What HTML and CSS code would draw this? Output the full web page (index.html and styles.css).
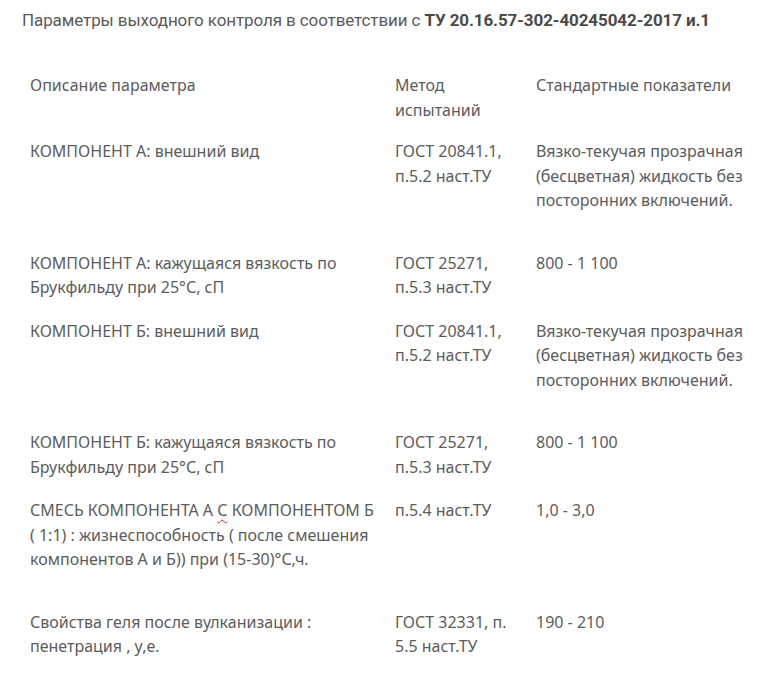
FILE: index.html
```html
<!DOCTYPE html>
<html lang="ru">
<head>
<meta charset="utf-8">
<link rel="stylesheet" href="styles.css">
</head>
<body>
<div class="page">
  <p class="title">Параметры выходного контроля в соответствии с <b>ТУ 20.16.57-302-40245042-2017 и.1</b></p>
  <table class="params">
    <tr class="head">
      <td class="c1">Описание параметра</td>
      <td class="c2">Метод испытаний</td>
      <td class="c3">Стандартные показатели</td>
    </tr>
    <tr class="tall">
      <td class="c1">КОМПОНЕНТ А: внешний вид</td>
      <td class="c2">ГОСТ 20841.1, п.5.2 наст.ТУ</td>
      <td class="c3">Вязко-текучая прозрачная (бесцветная) жидкость без посторонних включений.</td>
    </tr>
    <tr>
      <td class="c1">КОМПОНЕНТ А: кажущаяся вязкость по Брукфильду при 25°С, сП</td>
      <td class="c2">ГОСТ 25271, п.5.3 наст.ТУ</td>
      <td class="c3">800 - 1 100</td>
    </tr>
    <tr class="tall">
      <td class="c1">КОМПОНЕНТ Б: внешний вид</td>
      <td class="c2">ГОСТ 20841.1, п.5.2 наст.ТУ</td>
      <td class="c3">Вязко-текучая прозрачная (бесцветная) жидкость без посторонних включений.</td>
    </tr>
    <tr>
      <td class="c1">КОМПОНЕНТ Б: кажущаяся вязкость по Брукфильду при 25°С, сП</td>
      <td class="c2">ГОСТ 25271, п.5.3 наст.ТУ</td>
      <td class="c3">800 - 1 100</td>
    </tr>
    <tr class="tall">
      <td class="c1">СМЕСЬ КОМПОНЕНТА А <span class="spell">С</span> КОМПОНЕНТОМ Б ( 1:1) : жизнеспособность ( после смешения компонентов А и Б)) при (15-30)°С,ч.</td>
      <td class="c2">п.5.4 наст.ТУ</td>
      <td class="c3">1,0 - 3,0</td>
    </tr>
    <tr>
      <td class="c1">Свойства геля после вулканизации : пенетрация , у,е.</td>
      <td class="c2">ГОСТ 32331, п. 5.5 наст.ТУ</td>
      <td class="c3">190 - 210</td>
    </tr>
  </table>
</div>
</body>
</html>
```

FILE: styles.css
```css
html, body {
  margin: 0;
  padding: 0;
  background: #ffffff;
}
body {
  font-family: "Noto Sans", "Open Sans", sans-serif;
  color: #5c5c5c;
}
.page {
  padding: 8px 0 0 22px;
}
.title {
  margin: 0;
  font-family: "Roboto", "Liberation Sans", sans-serif;
  font-size: 17px;
  line-height: 24px;
  letter-spacing: -0.1px;
  color: #5a5a5a;
}
.title b {
  font-weight: 700;
  color: #4a4a4a;
}
.params {
  border-collapse: collapse;
  margin: 41px 0 0 8px;
  font-size: 16px;
  line-height: 24.5px;
}
.params td {
  vertical-align: top;
  padding: 0 0 19px 0;
}
.params tr.head td {
  padding-bottom: 17px;
}
.params tr.tall td {
  padding-bottom: 38px;
}
.c1 { width: 350px; padding-right: 15px !important; }
.c2 { width: 125px; padding-right: 16px !important; }
.c3 { width: 218px; }
.spell {
  text-decoration: underline wavy #e02020;
  text-decoration-thickness: 1px;
  text-underline-offset: 3px;
}
```
